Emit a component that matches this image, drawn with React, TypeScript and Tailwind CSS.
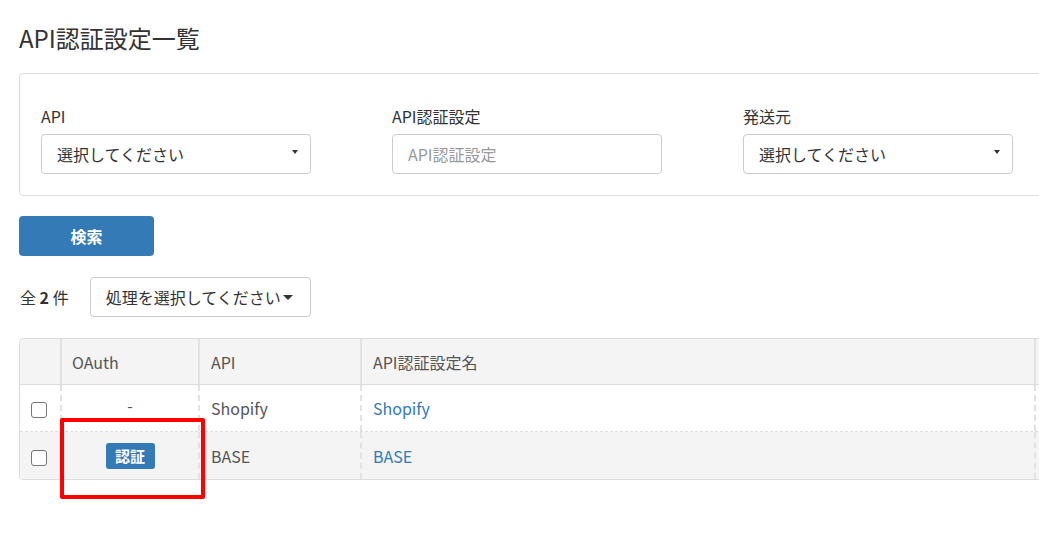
const font = { fontFamily: '"Noto Sans CJK JP", "Noto Sans", sans-serif' };

function Field({ label, kind }: { label: string; kind: "select" | "input" }) {
  return (
    <div className="w-[351px] shrink-0">
      <div className="text-[16px] leading-[24px] text-[#333]">{label}</div>
      <div className="mt-[6px] w-[270px] h-[40px] border border-[#ccc] rounded-[4px] bg-white flex items-center pl-[15px] pr-[12px] text-[16px]">
        {kind === "select" ? (
          <>
            <span className="flex-1 text-[#333]">選択してください</span>
            <span className="mb-[5px] inline-block w-0 h-0 border-l-[3px] border-r-[3px] border-t-[4px] border-l-transparent border-r-transparent border-t-[#333]" />
          </>
        ) : (
          <span className="text-[#999]">{label}</span>
        )}
      </div>
    </div>
  );
}

function Checkbox() {
  return <span className="block w-[16px] h-[16px] border border-[#767676] rounded-[3px] bg-white" />;
}

export default function App() {
  return (
    <div className="relative w-full h-[546px] overflow-hidden bg-white text-[#333]" style={font}>
      {/* Title */}
      <h1 className="ml-[19px] mt-[20px] text-[24px] leading-[36px] text-[#333] font-normal">API認証設定一覧</h1>

      {/* Filter panel */}
      <div className="ml-[19px] mt-[17px] w-[1100px] border border-[#ddd] rounded-[4px] pl-[21px] pt-[30px] pb-[21px] flex">
        <Field label="API" kind="select" />
        <Field label="API認証設定" kind="input" />
        <Field label="発送元" kind="select" />
      </div>

      {/* Search */}
      <button className="ml-[19px] mt-[20px] w-[135px] h-[40px] rounded-[4px] bg-[#337ab7] text-white text-[16px] font-bold flex items-center justify-center">
        検索
      </button>

      {/* Count + bulk action */}
      <div className="ml-[20px] mt-[21px] flex items-center">
        <span className="text-[16px] text-[#333]">
          全 <b>2</b> 件
        </span>
        <div className="ml-[21px] w-[221px] h-[40px] border border-[#ccc] rounded-[4px] flex items-center pl-[15px] text-[16px] text-[#333]">
          処理を選択してください
          <span className="ml-[2px] mt-[1px] inline-block w-0 h-0 border-l-[5px] border-r-[5px] border-t-[5px] border-l-transparent border-r-transparent border-t-[#333]" />
        </div>
      </div>

      {/* Table */}
      <div className="ml-[19px] mt-[21px] w-[1100px] border border-[#ddd] rounded-[4px] overflow-hidden text-[16px] text-[#555]">
        <div className="flex h-[46px] bg-[#f4f4f4] border-b border-[#ddd]">
          <div className="w-[42px] border-r-2 border-[#e2e2e2]" />
          <div className="w-[138px] border-r-2 border-[#e2e2e2] flex items-center px-[10px]">OAuth</div>
          <div className="w-[162px] border-r-2 border-[#e2e2e2] flex items-center px-[11px]">API</div>
          <div className="w-[674px] border-r-2 border-[#e2e2e2] flex items-center px-[11px]">API認証設定名</div>
          <div className="flex-1" />
        </div>
        <div className="flex h-[47px] bg-white border-b border-dashed border-[#ddd]">
          <div className="w-[42px] border-r-2 border-dashed border-[#e2e2e2] flex items-center pl-[11px] pt-[4px]">
            <Checkbox />
          </div>
          <div className="w-[138px] border-r-2 border-dashed border-[#e2e2e2] flex items-center justify-center pb-[6px]">-</div>
          <div className="w-[162px] border-r-2 border-dashed border-[#e2e2e2] flex items-center px-[11px]">Shopify</div>
          <div className="w-[674px] border-r-2 border-dashed border-[#e2e2e2] flex items-center px-[11px] text-[#337ab7]">Shopify</div>
          <div className="flex-1" />
        </div>
        <div className="flex h-[47px] bg-[#f4f4f4]">
          <div className="w-[42px] border-r-2 border-dashed border-[#e2e2e2] flex items-center pl-[11px] pt-[4px]">
            <Checkbox />
          </div>
          <div className="w-[138px] border-r-2 border-dashed border-[#e2e2e2] flex items-center justify-center">
            <button className="w-[49px] h-[26px] rounded-[3px] bg-[#337ab7] text-white text-[15px] font-bold leading-none flex items-center justify-center">
              認証
            </button>
          </div>
          <div className="w-[162px] border-r-2 border-dashed border-[#e2e2e2] flex items-center px-[11px]">BASE</div>
          <div className="w-[674px] border-r-2 border-dashed border-[#e2e2e2] flex items-center px-[11px] text-[#337ab7]">BASE</div>
          <div className="flex-1" />
        </div>
      </div>

      {/* Annotation highlight */}
      <div className="absolute left-[60px] top-[418px] w-[145px] h-[81px] border-[4px] border-[#ff0000] rounded-[2px]" />
    </div>
  );
}
